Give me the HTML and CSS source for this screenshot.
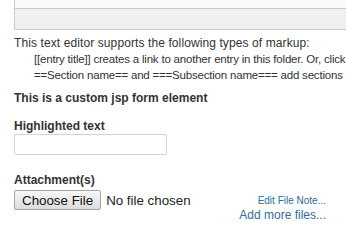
FILE: index.html
```html
<!DOCTYPE html>
<html lang="en">
<head>
  <meta charset="UTF-8">
  <meta name="viewport" content="width=device-width, initial-scale=1.0">
  <title>Entry Editor - Custom Form</title>
  <link rel="stylesheet" href="styles.css">
</head>
<body>
  <div class="editor-box">
    <div class="editor-toolbar"></div>
    <div class="editor-area"></div>
  </div>

  <div class="markup-help">
    <div class="intro">This text editor supports the following types of markup:</div>
    <div class="indent">[[entry title]] creates a link to another entry in this folder. Or, click</div>
    <div class="indent">==Section name== and ===Subsection name=== add sections and subsections.</div>
  </div>

  <div class="custom-element">This is a custom jsp form element</div>

  <div class="field">
    <label for="highlighted">Highlighted text</label>
    <input type="text" id="highlighted" class="text-input">
  </div>

  <div class="field attach">
    <label for="attachment">Attachment(s)</label>
    <div class="attach-row">
      <input type="file" id="attachment" class="file-input">
      <div class="file-links">
        <a href="#" class="edit-note">Edit File Note...</a>
        <a href="#" class="add-files">Add more files...</a>
      </div>
    </div>
  </div>
</body>
</html>
```

FILE: styles.css
```css
body {
  font-family: "Liberation Sans", Arial, sans-serif;
  font-size: 12px;
  line-height: 16px;
  color: #333;
  margin: 0;
  overflow: hidden;
}
.editor-box {
  margin-left: 14px;
  border-left: 1px solid #c9c9c9;
}
.editor-toolbar {
  height: 8px;
  background-color: #fafafa;
  border-bottom: 1px solid #c9c9c9;
}
.editor-area {
  height: 20px;
  background-color: #f0f0f0;
  border-bottom: 1px solid #c9c9c9;
}
.markup-help {
  margin: 5px 0 0 14px;
  white-space: nowrap;
  overflow: hidden;
}
.markup-help .intro {
  letter-spacing: 0.1px;
}
.markup-help .indent {
  margin-left: 20px;
  font-size: 11.5px;
  letter-spacing: -0.2px;
}
.custom-element {
  margin: 7px 0 0 14px;
  font-weight: bold;
}
.field {
  margin: 12px 0 0 14px;
}
.field label {
  display: block;
  font-weight: bold;
}
.field.attach {
  margin-top: 17px;
}
.field.attach label {
  margin-bottom: 2px;
}
.text-input {
  box-sizing: border-box;
  width: 153px;
  height: 21px;
  margin: 0;
  border: 1px solid #d4d4d4;
  border-radius: 2px;
}
.attach-row {
  display: flex;
  justify-content: space-between;
  align-items: flex-start;
  width: 312px;
}
.file-input {
  flex: none;
  width: 190px;
  font-family: "Liberation Sans", Arial, sans-serif;
  font-size: 13.33px;
  color: #222;
  margin: 0;
}
.file-input::file-selector-button {
  font-family: inherit;
  font-size: 13.33px;
  height: 20px;
  padding: 0 7px;
  margin: 0 5px 0 0;
  color: #111;
  background: linear-gradient(#f8f8f8, #dcdcdc);
  border: 1px solid #a6a6a6;
  border-radius: 2px;
}
.file-links {
  display: flex;
  flex-direction: column;
  align-items: flex-end;
  padding-top: 5px;
  white-space: nowrap;
}
.file-links a {
  color: #2f6d94;
  text-decoration: none;
}
.edit-note {
  font-size: 10px;
  line-height: 12px;
}
.add-files {
  font-size: 12px;
  line-height: 16px;
}
```
